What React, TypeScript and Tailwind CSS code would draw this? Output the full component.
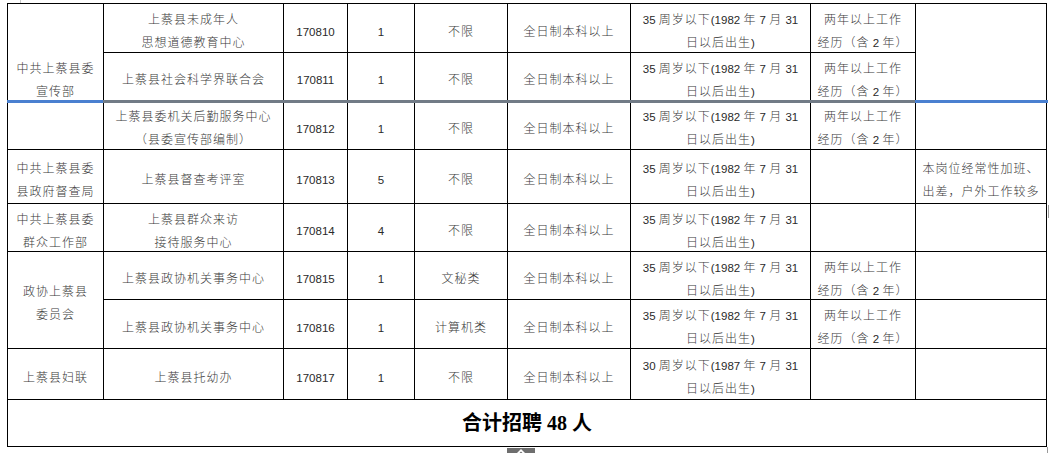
import React from "react";

const AGE35 = "35 周岁以下(1982 年 7 月 31|日以后出生)";
const AGE30 = "30 周岁以下(1987 年 7 月 31|日以后出生)";
const EXP = "两年以上工作|经历（含 2 年）";
const EDU = "全日制本科以上";

function Run({ s }: { s: string }) {
  const parts = s.split(/([\u3000-\u303f\u3400-\u9fff\uff00-\uffef]+)/);
  return (
    <>
      {parts.map((p, i) =>
        /[\u3000-\u303f\u3400-\u9fff\uff00-\uffef]/.test(p) ? (
          <span key={i} className="tracking-[1px] text-[#3a3a3a]">
            {p}
          </span>
        ) : (
          <span key={i} className="text-[11.5px] text-[#2a2a2a]">
            {p}
          </span>
        )
      )}
    </>
  );
}

type CellProps = { t?: string; span?: string };

function Cell({ t = "", span = "" }: CellProps) {
  const lines = t ? t.split("|") : [];
  return (
    <div
      className={`${span} border-r border-b border-black flex flex-col items-center justify-center text-center pt-[8px] leading-[23px] whitespace-nowrap overflow-visible`}
    >
      {lines.map((l, i) => (
        <div key={i}>
          <Run s={l} />
        </div>
      ))}
    </div>
  );
}

export default function App() {
  return (
    <div className="relative w-[1050px] h-[453px] overflow-hidden bg-white font-['Liberation_Sans','Noto_Sans_CJK_SC',sans-serif] text-[12px] text-[#2a2a2a] font-light">
      <div className="pt-[3px] pl-[7px]">
        <div className="grid w-fit grid-cols-[96px_180px_64px_67px_93px_123px_180px_105px_131px] grid-rows-[49px_48px_49px_54px_48px_48px_49px_51px_47px] border-l border-t border-black">
          {/* row 1 */}
          <Cell t="中共上蔡县委|宣传部" span="row-span-3" />
          <Cell t="上蔡县未成年人|思想道德教育中心" />
          <Cell t="170810" />
          <Cell t="1" />
          <Cell t="不限" />
          <Cell t={EDU} />
          <Cell t={AGE35} />
          <Cell t={EXP} />
          <Cell span="row-span-3" />
          {/* row 2 */}
          <Cell t="上蔡县社会科学界联合会" />
          <Cell t="170811" />
          <Cell t="1" />
          <Cell t="不限" />
          <Cell t={EDU} />
          <Cell t={AGE35} />
          <Cell t={EXP} />
          {/* row 3 */}
          <Cell t="上蔡县委机关后勤服务中心|（县委宣传部编制）" />
          <Cell t="170812" />
          <Cell t="1" />
          <Cell t="不限" />
          <Cell t={EDU} />
          <Cell t={AGE35} />
          <Cell t={EXP} />
          {/* row 4 */}
          <Cell t="中共上蔡县委|县政府督查局" />
          <Cell t="上蔡县督查考评室" />
          <Cell t="170813" />
          <Cell t="5" />
          <Cell t="不限" />
          <Cell t={EDU} />
          <Cell t={AGE35} />
          <Cell />
          <Cell t="本岗位经常性加班、|出差，户外工作较多" />
          {/* row 5 */}
          <Cell t="中共上蔡县委|群众工作部" />
          <Cell t="上蔡县群众来访|接待服务中心" />
          <Cell t="170814" />
          <Cell t="4" />
          <Cell t="不限" />
          <Cell t={EDU} />
          <Cell t={AGE35} />
          <Cell />
          <Cell />
          {/* row 6 */}
          <Cell t="政协上蔡县|委员会" span="row-span-2" />
          <Cell t="上蔡县政协机关事务中心" />
          <Cell t="170815" />
          <Cell t="1" />
          <Cell t="文秘类" />
          <Cell t={EDU} />
          <Cell t={AGE35} />
          <Cell t={EXP} />
          <Cell />
          {/* row 7 */}
          <Cell t="上蔡县政协机关事务中心" />
          <Cell t="170816" />
          <Cell t="1" />
          <Cell t="计算机类" />
          <Cell t={EDU} />
          <Cell t={AGE35} />
          <Cell t={EXP} />
          <Cell />
          {/* row 8 */}
          <Cell t="上蔡县妇联" />
          <Cell t="上蔡县托幼办" />
          <Cell t="170817" />
          <Cell t="1" />
          <Cell t="不限" />
          <Cell t={EDU} />
          <Cell t={AGE30} />
          <Cell />
          <Cell />
          {/* footer */}
          <div className="col-span-9 border-r border-b border-black flex items-center justify-center font-['Liberation_Serif','Noto_Sans_CJK_SC',serif] text-[20px] font-bold text-black">
            合计招聘 48 人
          </div>
        </div>
      </div>

      {/* selection / drag line over the table */}
      <div className="absolute left-[7px] top-[100px] w-[96px] h-[3px] bg-[#4a80d0]" />
      <div className="absolute left-[103px] top-[100px] w-[812px] h-[3px] bg-[#717b86]" />
      <div className="absolute left-[915px] top-[100px] w-[133px] h-[3px] bg-[#4a80d0]" />

      {/* small artifacts */}
      <div className="absolute left-[20px] top-0 w-px h-[3px] bg-[#c8c8c8]" />
      <div className="absolute left-[1048px] top-[205px] w-px h-[13px] bg-[#9a9a9a]" />
      <div className="absolute left-[1047px] top-[447px] w-px h-[6px] bg-[#9a9a9a]" />

      {/* back-to-top button peeking at the bottom */}
      <div className="absolute left-[507px] top-[448px] w-[28px] h-[12px] bg-[#6e6e6e] flex justify-center">
        <svg width="12" height="6" viewBox="0 0 12 6" className="mt-[1px]">
          <path d="M6 0 L11 5 L8.5 5 L6 2.5 L3.5 5 L1 5 Z" fill="#ffffff" />
        </svg>
      </div>
    </div>
  );
}
